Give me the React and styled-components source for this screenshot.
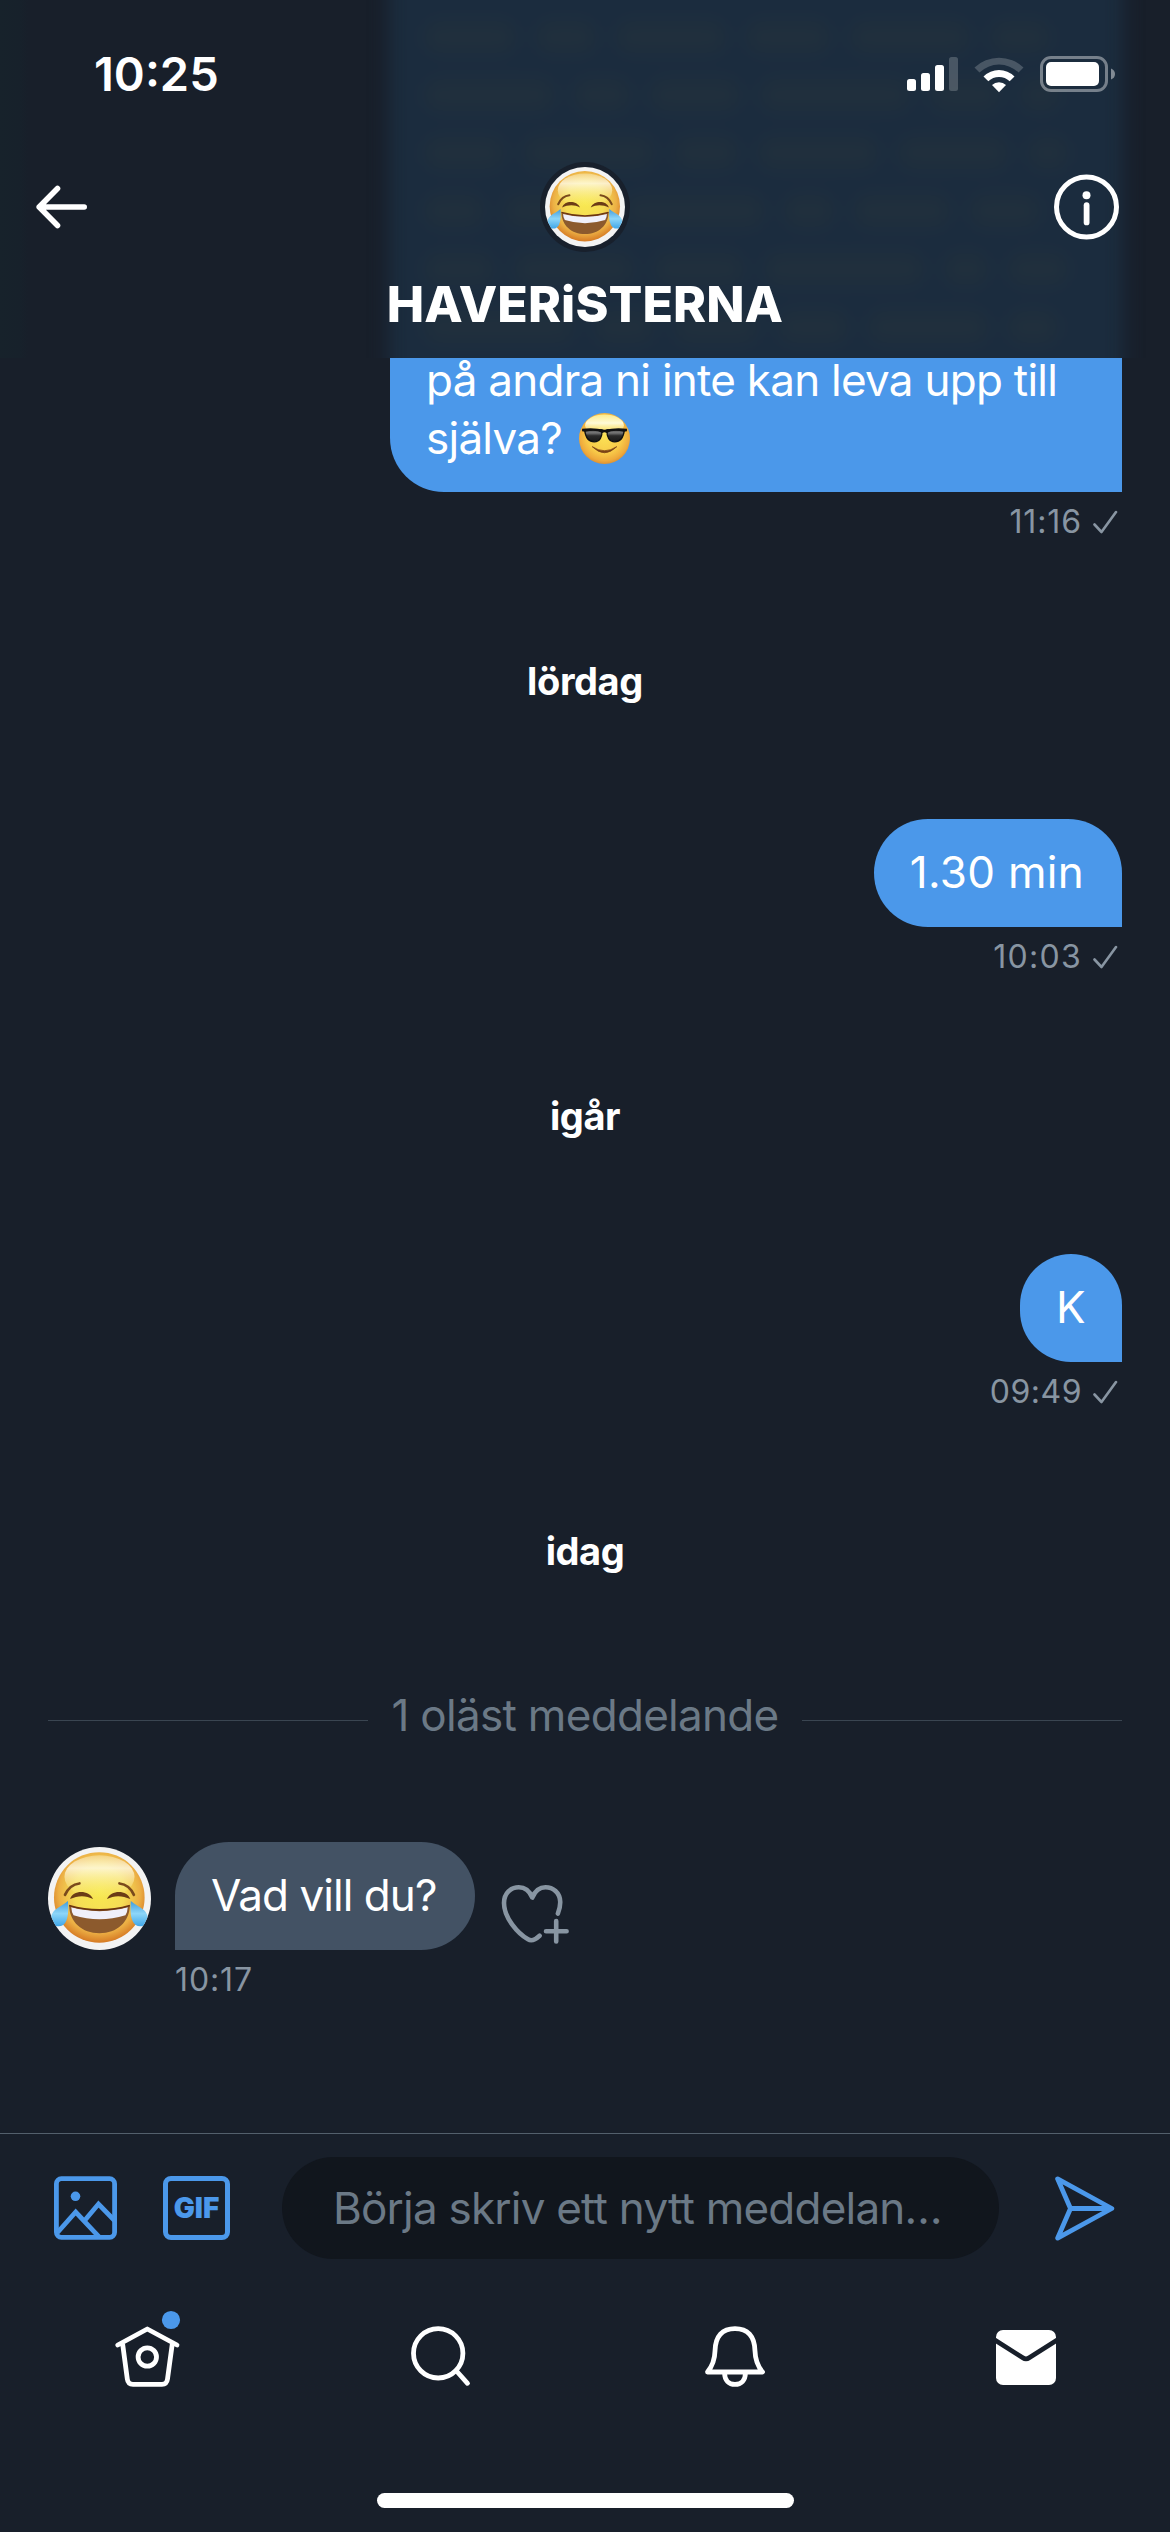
import React from 'react';
import styled, { createGlobalStyle } from 'styled-components';

const color = {
  page: '#181f2a',
  blue: '#4b98ea',
  received: '#435264',
  field: '#11161d',
  muted: '#8895a2',
  faint: '#6b7986',
  white: '#ffffff',
};

const GlobalStyle = createGlobalStyle`
  * { box-sizing: border-box; }
  body { margin: 0; background: ${color.page}; }
  svg { display: block; flex: none; }
`;

const Screen = styled.div`
  width: 1170px;
  height: 2532px;
  display: flex;
  flex-direction: column;
  overflow: hidden;
  background: ${color.page};
  color: ${color.white};
  font-family: Inter, "Liberation Sans", sans-serif;
`;

/* ---------- header ---------- */

const Header = styled.header`
  position: relative;
  z-index: 1;
  height: 358px;
  flex: none;
  overflow: hidden;
  display: flex;
  flex-direction: column;
  background: linear-gradient(90deg, #17222b 0, #17212b 20px, ${color.page} 28px);
`;

const Frost = styled.div`
  position: absolute;
  inset: -40px 46px -40px 388px;
  padding: 61px 36px 0;
  display: flex;
  flex-direction: column;
  gap: 26px;
  background: #1b2c3e;
  filter: blur(9px);
`;

const FrostLine = styled.div`
  flex: none;
  display: flex;
  gap: 20px;
  height: 32px;
`;

const FrostWord = styled.span`
  width: ${(p) => p.$width}px;
  border-radius: 16px;
  background: #202f3d;
`;

const StatusBar = styled.div`
  position: relative;
  display: flex;
  align-items: center;
  justify-content: space-between;
  height: 56px;
  margin-top: 46px;
  padding: 0 54px 0 94px;
`;

const Clock = styled.span`
  font-size: 47px;
  font-weight: 600;
  line-height: 56px;
`;

const StatusIcons = styled.div`
  display: flex;
  align-items: center;
  gap: 16px;
`;

const Toolbar = styled.div`
  position: relative;
  display: grid;
  grid-template-columns: 1fr auto 1fr;
  align-items: center;
  margin-top: 60px;
  padding: 0 36px;
`;

const InfoSlot = styled.div`
  justify-self: end;
  margin-right: 15px;
`;

const AvatarRing = styled.div`
  padding: 5px;
  border-radius: 50%;
  background: #18202c;
`;

const Title = styled.h1`
  position: relative;
  margin: 22px 0 0;
  text-align: center;
  font-size: 50px;
  font-weight: 800;
  line-height: 60px;
  letter-spacing: 0.1px;
`;

/* ---------- conversation ---------- */

const Conversation = styled.main`
  flex: 1;
  display: flex;
  flex-direction: column;
  margin-top: -7px;
  padding: 0 48px;
`;

const Sent = styled.div`
  display: flex;
  flex-direction: column;
  align-items: flex-end;
`;

const Bubble = styled.div`
  max-width: 732px;
  padding: ${(p) => (p.$continued ? '0 36px 25px' : '24px 38px 26px 36px')};
  border-radius: ${(p) =>
    p.$continued ? '0 0 0 54px' : p.$received ? '54px 54px 54px 0' : '54px 54px 0 54px'};
  background: ${(p) => (p.$received ? color.received : color.blue)};
  font-size: 44px;
  line-height: 58px;
  letter-spacing: ${(p) => p.$track || 0}px;
`;

const InlineEmoji = styled.span`
  display: inline-block;
  width: 51px;
  height: 51px;
  margin-left: 5px;
  vertical-align: -10px;
`;

const Meta = styled.div`
  display: flex;
  align-items: center;
  gap: 11px;
  margin: 10px 0 0 ${(p) => (p.$received ? 127 : 0)}px;
  padding-right: 4px;
  color: ${color.muted};
  font-size: 32px;
  line-height: 40px;
  letter-spacing: ${(p) => p.$track}px;
`;

const DayLabel = styled.div`
  margin: 115px 0 114px;
  text-align: center;
  font-size: 38px;
  font-weight: 700;
  line-height: 48px;
  letter-spacing: -0.4px;
`;

const Unread = styled.div`
  display: flex;
  align-items: center;
  gap: 23px;
  margin: -3px 0 98px;
  color: ${color.faint};
  font-size: 44px;
  line-height: 58px;
  letter-spacing: -0.7px;
`;

const Rule = styled.span`
  flex: 1;
  height: 1px;
  margin-top: 10px;
  background: #3a4551;
`;

const ReceivedRow = styled.div`
  display: flex;
  align-items: flex-end;
`;

const AvatarSlot = styled.div`
  margin-right: 24px;
`;

const ReactionSlot = styled.div`
  margin: 0 0 3px 25px;
`;

/* ---------- composer and tabs ---------- */

const Composer = styled.div`
  flex: none;
  display: flex;
  align-items: center;
  height: 126px;
  padding: 23px 55px 0 54px;
  border-top: 1px solid #53606c;
`;

const GifButton = styled.div`
  display: flex;
  align-items: center;
  justify-content: center;
  width: 67px;
  height: 64px;
  margin: 0 52px 0 46px;
  border: 5px solid ${color.blue};
  border-radius: 8px;
  color: ${color.blue};
  font-size: 28px;
  font-weight: 900;
`;

const Field = styled.div`
  width: 717px;
  height: 102px;
  margin-right: 56px;
  padding-left: 51px;
  border-radius: 51px;
  background: ${color.field};
  color: ${color.faint};
  font-size: 44px;
  line-height: 102px;
  letter-spacing: -0.78px;
  white-space: nowrap;
`;

const Tabs = styled.nav`
  flex: none;
  display: grid;
  grid-template-columns: repeat(4, 292px);
  justify-items: center;
  padding: 49px 0 0 2px;
`;

const HomeIndicator = styled.div`
  flex: none;
  align-self: center;
  width: 417px;
  height: 15px;
  margin: 101px 0 24px;
  border-radius: 8px;
  background: ${color.white};
`;

/* ---------- drawings ---------- */

const JoyFace = ({ size, id }) => (
  <svg width={size} height={size} viewBox="0 0 100 100">
    <defs>
      <radialGradient id={`${id}-face`} cx="50%" cy="44%" r="56%">
        <stop offset="0" stopColor="#f8e94f" />
        <stop offset="0.5" stopColor="#f5dc55" />
        <stop offset="0.8" stopColor="#ecb045" />
        <stop offset="1" stopColor="#d67a24" />
      </radialGradient>
      <linearGradient id={`${id}-shine`} x1="0" y1="0" x2="0" y2="1">
        <stop offset="0" stopColor="#fffbe9" stopOpacity="0.35" />
        <stop offset="0.3" stopColor="#fffbe9" stopOpacity="0.8" />
        <stop offset="1" stopColor="#fbf08a" stopOpacity="0" />
      </linearGradient>
      <linearGradient id={`${id}-tear`} x1="0" y1="0" x2="0" y2="1">
        <stop offset="0" stopColor="#3f9bdc" />
        <stop offset="0.5" stopColor="#8ed6f8" />
        <stop offset="1" stopColor="#3fa6e8" />
      </linearGradient>
      <clipPath id={`${id}-clip`}>
        <circle cx="50" cy="50" r="50" />
      </clipPath>
    </defs>
    <circle cx="50" cy="50" r="50" fill="#f3f3f3" />
    <circle cx="49.8" cy="49" r="44" fill={`url(#${id}-face)`} />
    <ellipse cx="50" cy="29" rx="34" ry="21" fill={`url(#${id}-shine)`} />
    <g fill="none" stroke="#7a4a1c" strokeLinecap="round">
      <path d="M16.5 46.500Q21 36.500 30.500 35.400" strokeWidth="2.600" />
      <path d="M83.400 46.500Q79 36.500 69.400 35.400" strokeWidth="2.600" />
    </g>
    <g fill="#6b3c16">
      <path d="M21.400 50.600C24 41.500 40 41.500 43.800 50.600C37 46.800 29 46.800 21.400 50.600Z" />
      <path d="M57.200 50.600C61 41.500 77 41.500 79.900 50.600C72 46.800 64 46.800 57.200 50.600Z" />
    </g>
    <path d="M20.500 56.800Q50 65.400 79.500 56.800C79 73 67 83.700 50 83.700S21 73 20.500 56.800Z" fill="#8c5a2d" />
    <path d="M22.600 58.600Q50 66 77.400 58.600Q77.200 63.500 75.200 66.200Q50 74.200 24.800 66.200Q22.800 63.500 22.600 58.600Z" fill="#f0f0fa" />
    <path d="M20.500 56.800Q50 65.400 79.500 56.800" fill="none" stroke="#6b3410" strokeWidth="1.600" />
    <g clipPath={`url(#${id}-clip)`} fill={`url(#${id}-tear)`}>
      <path d="M19.400 52.400C19.800 60 20 66 17.800 71.500C15.500 77 10 78.500 6 75.500C1.500 72 2 66 6.500 61.500C10 58 15.500 56 19.400 52.400Z" />
      <path d="M80.400 52.400C80 60 79.800 66 82 71.500C84.300 77 89.800 78.500 93.800 75.500C98.300 72 97.800 66 93.300 61.500C89.800 58 84.300 56 80.400 52.400Z" />
    </g>
  </svg>
);

const CoolFace = () => (
  <svg width="51" height="51" viewBox="0 0 100 100">
    <defs>
      <radialGradient id="cool-face" cx="50%" cy="45%" r="57%">
        <stop offset="0" stopColor="#fbe255" />
        <stop offset="0.6" stopColor="#f8cb49" />
        <stop offset="0.85" stopColor="#efab3c" />
        <stop offset="1" stopColor="#d98a2e" />
      </radialGradient>
      <linearGradient id="cool-shine" x1="0" y1="0" x2="0" y2="1">
        <stop offset="0" stopColor="#fff6a0" stopOpacity="0.8" />
        <stop offset="0.4" stopColor="#fffde0" stopOpacity="0.95" />
        <stop offset="1" stopColor="#fdf07a" stopOpacity="0" />
      </linearGradient>
      <linearGradient id="cool-lens" x1="0" y1="0" x2="0" y2="1">
        <stop offset="0" stopColor="#555" />
        <stop offset="0.25" stopColor="#777" />
        <stop offset="0.5" stopColor="#2a2a2a" />
        <stop offset="1" stopColor="#1a1a1a" />
      </linearGradient>
    </defs>
    <circle cx="50" cy="50" r="50" fill="url(#cool-face)" />
    <ellipse cx="50" cy="24" rx="38" ry="21" fill="url(#cool-shine)" />
    <g fill="url(#cool-lens)" stroke="#111" strokeWidth="2.500">
      <path d="M11 33H45C46 46 41 56.500 30 56.500S13 50 11 33Z" />
      <path d="M89 33H55C54 46 59 56.500 70 56.500S87 50 89 33Z" />
    </g>
    <path d="M6 31Q28 28 50 33Q72 28 94 31V36L88 37Q68 32 54 39Q50 36 46 39Q32 32 12 37L6 36Z" fill="#111" />
    <path d="M26 66Q50 82 74 66Q50 90 26 66Z" fill="#7a4216" stroke="#7a4216" strokeWidth="1.500" strokeLinejoin="round" />
  </svg>
);

const Signal = () => (
  <svg width="51" height="36" viewBox="0 0 51 36" fill="#fff">
    <rect x="0" y="23" width="9" height="12" rx="2.500" />
    <rect x="14" y="17" width="9" height="18" rx="2.500" />
    <rect x="28" y="9" width="9" height="26" rx="2.500" />
    <rect x="42" y="1" width="9" height="34" rx="2.500" opacity="0.2" />
  </svg>
);

const Wifi = () => (
  <svg width="50" height="38" viewBox="0 0 50 38" fill="#fff">
    <path d="M0.500 12.500A35.500 35.500 0 0 1 49.500 12.500L44.500 17.500A28 28 0 0 0 5.500 17.500Z" opacity="0.2" />
    <path d="M9.500 21.500A22 22 0 0 1 40.500 21.500L35.700 26.300A15.500 15.500 0 0 0 14.300 26.300Z" />
    <path d="M18 30A10 10 0 0 1 32 30L25 37.300Z" />
  </svg>
);

const Battery = () => (
  <svg width="76" height="36" viewBox="0 0 76 36">
    <rect x="1.500" y="1.500" width="65" height="33" rx="9.500" fill="none" stroke="#fff" strokeOpacity="0.4" strokeWidth="3" />
    <rect x="6" y="6" width="53" height="24" rx="5" fill="#fff" />
    <path d="M71 12.500Q75 14 75 18T71 23.500Z" fill="#fff" fillOpacity="0.45" />
  </svg>
);

const BackArrow = () => (
  <svg width="52" height="44" viewBox="0 0 52 44" fill="none" stroke="#fff" strokeWidth="5.600" strokeLinecap="round" strokeLinejoin="round">
    <path d="M21.500 3.500L3.200 22L21.500 40.500M3.200 22H48.200" />
  </svg>
);

const Info = () => (
  <svg width="65" height="66" viewBox="0 0 65 66" fill="#fff">
    <circle cx="32.500" cy="33" r="30" fill="none" stroke="#fff" strokeWidth="5" />
    <circle cx="32.500" cy="21.200" r="4" />
    <rect x="29.700" y="28.300" width="5.800" height="23" rx="2.900" />
  </svg>
);

const Check = () => (
  <svg width="25" height="24" viewBox="0 0 25 24" fill="none" stroke={color.muted} strokeWidth="2.600" strokeLinecap="round" strokeLinejoin="round">
    <path d="M1.500 14.500L8.500 22L23 2" />
  </svg>
);

const HeartPlus = () => (
  <svg width="70" height="64" viewBox="0 0 70 64" fill="none" stroke={color.muted} strokeWidth="4.600" strokeLinecap="round" strokeLinejoin="round">
    <path d="M57.900 30.500C59.500 26.500 60.400 22.500 60.200 18.500C59.800 9.500 53 4.200 45.500 4.200C39.500 4.200 34.800 8.500 32.300 14.500C29.800 8.500 25 4.200 18.800 4.200C11 4.200 4 10 4 20C4 35 18 50.500 28 56.300C31.500 58.300 34.500 57.500 39.600 52.800" />
    <path d="M56.200 38V58.500M46 48.200H66.600" />
  </svg>
);

const Picture = () => (
  <svg width="63" height="64" viewBox="0 0 63 64" fill="none" stroke={color.blue} strokeWidth="4.800" strokeLinejoin="round">
    <rect x="2.400" y="2.700" width="58.200" height="58.600" rx="5" />
    <path d="M3.500 56.500L21.700 36L45.500 61.300M31.500 43.500L44.500 28L60.500 44.500" strokeLinejoin="miter" />
    <circle cx="21.500" cy="20.300" r="4.800" fill={color.blue} stroke="none" />
  </svg>
);

const Send = () => (
  <svg width="60" height="65" viewBox="0 0 60 65" fill="none" stroke={color.blue} strokeWidth="4.800" strokeLinecap="round" strokeLinejoin="round">
    <path d="M2.600 2.900L56.800 32.500L2.600 62.100L15.500 32.500ZM15.500 32.500H56" />
  </svg>
);

const TabIcon = ({ children }) => (
  <svg width="72" height="84" viewBox="0 0 72 84" fill="none" stroke="#fff" strokeWidth="4.800" strokeLinecap="round" strokeLinejoin="round">
    {children}
  </svg>
);

const frostLines = [
  [92, 60, 110, 84, 120, 60],
  [130, 56, 90, 150, 70, 40],
  [80, 130, 64, 120, 110, 40],
  [60, 100, 140, 50, 96, 70],
  [70, 120, 90, 160, 44, 60],
  [150, 60, 84, 70, 120, 50],
];

export default function App() {
  return (
    <>
      <GlobalStyle />
      <Screen>
        <Header>
          <Frost>
            {frostLines.map((words, line) => (
              <FrostLine key={line}>
                {words.map((width, word) => (
                  <FrostWord key={word} $width={width} />
                ))}
              </FrostLine>
            ))}
          </Frost>
          <StatusBar>
            <Clock>10:25</Clock>
            <StatusIcons>
              <Signal />
              <Wifi />
              <Battery />
            </StatusIcons>
          </StatusBar>
          <Toolbar>
            <BackArrow />
            <AvatarRing>
              <JoyFace size={80} id="group" />
            </AvatarRing>
            <InfoSlot>
              <Info />
            </InfoSlot>
          </Toolbar>
          <Title>HAVERiSTERNA</Title>
        </Header>

        <Conversation>
          <Sent>
            <Bubble $continued $track={-0.74}>
              på andra ni inte kan leva upp till själva?{' '}
              <InlineEmoji>
                <CoolFace />
              </InlineEmoji>
            </Bubble>
            <Meta $track={0.9}>
              11:16 <Check />
            </Meta>
          </Sent>

          <DayLabel>lördag</DayLabel>
          <Sent>
            <Bubble $track={0.3}>1.30 min</Bubble>
            <Meta $track={1.3}>
              10:03 <Check />
            </Meta>
          </Sent>

          <DayLabel>igår</DayLabel>
          <Sent>
            <Bubble $track={-1.5}>K</Bubble>
            <Meta $track={0.5}>
              09:49 <Check />
            </Meta>
          </Sent>

          <DayLabel>idag</DayLabel>
          <Unread>
            <Rule />
            1 oläst meddelande
            <Rule />
          </Unread>

          <ReceivedRow>
            <AvatarSlot>
              <JoyFace size={103} id="sender" />
            </AvatarSlot>
            <Bubble $received $track={-0.93}>
              Vad vill du?
            </Bubble>
            <ReactionSlot>
              <HeartPlus />
            </ReactionSlot>
          </ReceivedRow>
          <Meta $received $track={0.9}>
            10:17
          </Meta>
        </Conversation>

        <Composer>
          <Picture />
          <GifButton>GIF</GifButton>
          <Field>Börja skriv ett nytt meddelan…</Field>
          <Send />
        </Composer>

        <Tabs>
          <TabIcon>
            <path d="M5.800 37L35.300 21L65 37M10.700 36.500L15.300 71Q16 76.300 21 76.300H50Q54.800 76.300 55.500 71L60.200 36.500" />
            <circle cx="35.300" cy="49" r="9.200" />
            <circle cx="59" cy="12" r="9.100" fill={color.blue} stroke="none" />
          </TabIcon>
          <TabIcon>
            <circle cx="34.200" cy="45.300" r="24.700" />
            <path d="M52.500 63L63.500 75.300" />
          </TabIcon>
          <TabIcon>
            <path d="M11.500 64C16.800 57.500 18.800 51.500 19 43C19.300 28 26.500 20.600 39 20.600S58.700 28 59 43C59.200 51.500 61.200 57.500 66.500 64Z" />
            <path d="M28.600 65C28.600 72.500 33 76.400 39 76.400S49.400 72.500 49.400 65" />
          </TabIcon>
          <TabIcon>
            <rect x="8" y="22" width="60" height="55" rx="7" fill="#fff" stroke="none" />
            <path d="M6 31.500L34.800 49.800Q38 52 41.200 49.800L70 31.500" stroke={color.page} strokeLinecap="butt" />
          </TabIcon>
        </Tabs>
        <HomeIndicator />
      </Screen>
    </>
  );
}
